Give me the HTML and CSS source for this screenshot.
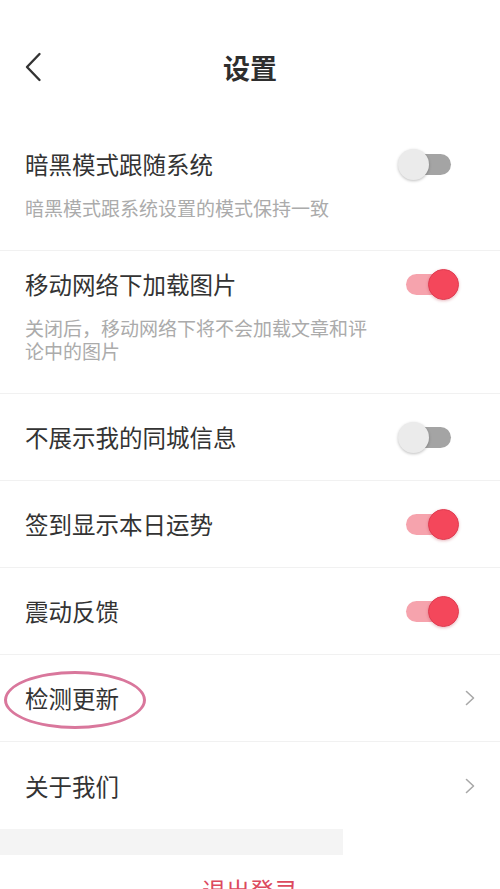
FILE: index.html
```html
<!DOCTYPE html>
<html lang="zh-CN">
<head>
<meta charset="utf-8">
<title>设置</title>
<link rel="stylesheet" href="styles.css">
</head>
<body>
<div class="page">
  <header class="header">
    <div class="back">
      <svg width="18" height="30" viewBox="0 0 18 30"><path d="M15.5 2 L3 15 L15.5 28" fill="none" stroke="#333" stroke-width="2.4" stroke-linecap="round" stroke-linejoin="round"/></svg>
    </div>
    <h1 class="title">设置</h1>
    <div></div>
  </header>

  <div class="row row-desc">
    <div class="row-head">
      <span class="label">暗黑模式跟随系统</span>
      <span class="switch"><span class="track"></span><span class="knob"></span></span>
    </div>
    <p class="desc">暗黑模式跟系统设置的模式保持一致</p>
  </div>

  <div class="row row-desc">
    <div class="row-head">
      <span class="label">移动网络下加载图片</span>
      <span class="switch on"><span class="track"></span><span class="knob"></span></span>
    </div>
    <p class="desc narrow">关闭后，移动网络下将不会加载文章和评论中的图片</p>
  </div>

  <div class="row row-simple">
    <span class="label">不展示我的同城信息</span>
    <span class="switch"><span class="track"></span><span class="knob"></span></span>
  </div>

  <div class="row row-simple">
    <span class="label">签到显示本日运势</span>
    <span class="switch on"><span class="track"></span><span class="knob"></span></span>
  </div>

  <div class="row row-simple">
    <span class="label">震动反馈</span>
    <span class="switch on"><span class="track"></span><span class="knob"></span></span>
  </div>

  <div class="row row-simple row-marked">
    <span class="label">检测更新</span>
    <svg class="chev" width="12" height="16" viewBox="0 0 12 16"><path d="M2.5 1.5 L9.5 8 L2.5 14.5" fill="none" stroke="#a8a8a8" stroke-width="1.6" stroke-linecap="round" stroke-linejoin="round"/></svg>
    <span class="mark"></span>
  </div>

  <div class="row row-simple last">
    <span class="label">关于我们</span>
    <svg class="chev" width="12" height="16" viewBox="0 0 12 16"><path d="M2.5 1.5 L9.5 8 L2.5 14.5" fill="none" stroke="#a8a8a8" stroke-width="1.6" stroke-linecap="round" stroke-linejoin="round"/></svg>
  </div>

  <div class="gap"></div>

  <div class="logout">退出登录</div>
</div>
</body>
</html>
```

FILE: styles.css
```css
* { box-sizing: border-box; }
html, body { margin: 0; padding: 0; background: #fff; }
body {
  font-family: "Noto Sans CJK SC", "Noto Sans", sans-serif;
  color: #333;
  overflow: hidden;
}
.page { width: 500px; }

.header {
  height: 131px;
  padding-top: 5px;
  display: grid;
  grid-template-columns: 1fr auto 1fr;
  align-items: center;
}
.back { padding-left: 24px; display: flex; align-items: center; }
.back svg { display: block; margin-top: -2px; }
.title {
  margin: 0;
  font-size: 27px;
  font-weight: 700;
  line-height: 36px;
  color: #2e2e2e;
}

.row {
  border-bottom: 1px solid #f1f1f1;
  padding: 0 41px 0 25px;
}
.row.last { border-bottom: none; }
.label {
  font-size: 23.5px;
  line-height: 30px;
  color: #333;
}
.row-desc { padding-top: 18px; padding-bottom: 31px; }
.row-head {
  display: flex;
  justify-content: space-between;
  align-items: center;
  height: 30px;
}
.desc {
  margin: 17px 0 0;
  font-size: 19px;
  line-height: 23px;
  color: #ababab;
}
.desc.narrow { max-width: 345px; }

.row-simple {
  height: 87px;
  display: flex;
  justify-content: space-between;
  align-items: center;
}
.row-marked { position: relative; padding-right: 24px; }
.last { padding-right: 24px; }
.chev { display: block; }

.mark {
  position: absolute;
  left: 4px;
  top: 16px;
  width: 142px;
  height: 58px;
  border: 3px solid #d9779c;
  border-radius: 50%;
}

.switch {
  position: relative;
  display: block;
  width: 61px;
  height: 31px;
  flex: none;
}
.track {
  position: absolute;
  left: 8px;
  right: 8px;
  top: 5px;
  height: 21px;
  border-radius: 11px;
  background: #a4a4a4;
}
.knob {
  position: absolute;
  left: 0;
  top: 0;
  width: 31px;
  height: 31px;
  border-radius: 50%;
  background: #ebebeb;
  box-shadow: 0 1px 3px rgba(0,0,0,0.25);
}
.switch.on .track { background: #f6a3ad; }
.switch.on .knob {
  left: 30px;
  background: #f4475b;
  border: 1px solid #e03d52;
  box-shadow: 0 1px 3px rgba(180,30,50,0.3);
}

.gap {
  width: 343px;
  height: 26px;
  background: #f4f4f4;
}
.logout {
  padding-top: 20px;
  text-align: center;
  font-size: 24px;
  line-height: 30px;
  color: #dc4a5e;
}
```
